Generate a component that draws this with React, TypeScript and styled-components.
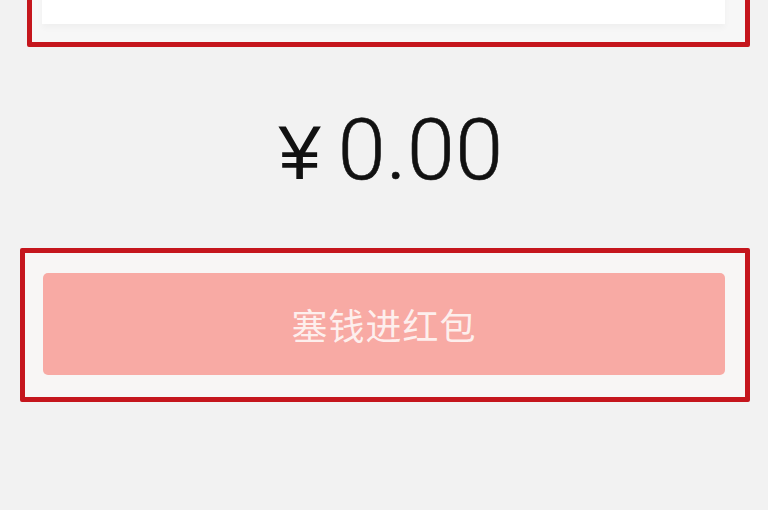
import React from 'react';
import styled, { createGlobalStyle } from 'styled-components';

const GlobalStyle = createGlobalStyle`
    html, body {
        margin: 0;
        padding: 0;
        background: #f2f2f2;
        overflow: hidden;
    }
    * {
        box-sizing: border-box;
    }
`;

const Page = styled.div`
    width: 768px;
    height: 510px;
    display: flex;
    flex-direction: column;
    font-family: Roboto, "Liberation Sans", "Noto Sans CJK SC", sans-serif;
`;

// red annotation frame drawn round a part of the screen
const Highlight = styled.div<{ $left: number; $width: number }>`
    margin-left: ${(p) => p.$left}px;
    width: ${(p) => p.$width}px;
    border: 5px solid #c5161d;
    border-radius: 2px;
    background: #f7f7f7;
`;

const TopHighlight = styled(Highlight)`
    margin-top: -30px;
    padding: 10px 20px 18px 10px;
`;

const InputCard = styled.div`
    height: 39px;
    background: #ffffff;
    box-shadow: 0 4px 6px rgba(0, 0, 0, 0.03);
`;

const Amount = styled.div`
    margin-top: 60px;
    height: 88px;
    padding-left: 14px;
    display: flex;
    justify-content: center;
    align-items: baseline;
    gap: 17px;
    line-height: 1;
    color: #111111;
`;

const Currency = styled.span`
    font-family: "Liberation Sans", sans-serif;
    font-size: 76px;
`;

const Value = styled.span`
    font-size: 86px;
    font-weight: 300;
    letter-spacing: 0.5px;
    -webkit-text-stroke: 0.6px #111111;
`;

const ButtonHighlight = styled(Highlight)`
    margin-top: 53px;
    height: 154px;
    padding: 20px 20px 22px 18px;
    background: #f8f6f5;
`;

const SubmitButton = styled.button`
    display: block;
    width: 100%;
    height: 102px;
    border: none;
    border-radius: 5px;
    background: #f8aaa4;
    color: rgba(255, 255, 255, 0.82);
    font-family: "Noto Sans CJK SC", sans-serif;
    font-size: 36px;
    letter-spacing: 1px;
    cursor: not-allowed;
`;

export default function App() {
    return (
        <>
            <GlobalStyle />
            <Page>
                <TopHighlight $left={27} $width={723}>
                    <InputCard />
                </TopHighlight>

                <Amount>
                    <Currency>¥</Currency>
                    <Value>0.00</Value>
                </Amount>

                <ButtonHighlight $left={20} $width={730}>
                    <SubmitButton disabled>塞钱进红包</SubmitButton>
                </ButtonHighlight>
            </Page>
        </>
    );
}
